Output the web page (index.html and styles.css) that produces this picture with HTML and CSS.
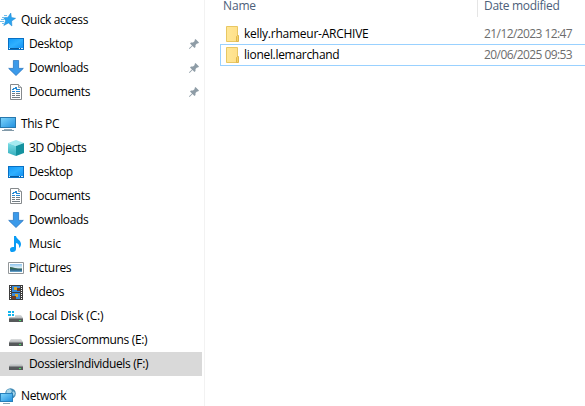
FILE: index.html
```html
<!DOCTYPE html>
<html lang="en">
<head>
<meta charset="utf-8">
<title>DossiersIndividuels (F:)</title>
<link rel="stylesheet" href="styles.css">
</head>
<body>
<svg class="defs" aria-hidden="true">
  <defs>
    <linearGradient id="blue" x2="1" y2="1"><stop stop-color="#149bfa"/><stop offset=".5" stop-color="#2fb0ff"/><stop offset="1" stop-color="#1492f4"/></linearGradient>
    <linearGradient id="screen" x2="1" y2="1"><stop stop-color="#7bd3fb"/><stop offset="1" stop-color="#2492df"/></linearGradient>
    <linearGradient id="sky" x2="0" y2="1"><stop stop-color="#8fc4ef"/><stop offset=".5" stop-color="#e2f2f5"/><stop offset=".6" stop-color="#3c6d66"/><stop offset=".75" stop-color="#285f83"/><stop offset="1" stop-color="#71b0d8"/></linearGradient>
    <linearGradient id="fold"><stop stop-color="#ffe796"/><stop offset="1" stop-color="#ffe08a"/></linearGradient>
    <linearGradient id="side" x2="0" y2="1"><stop stop-color="#7bdde6"/><stop offset="1" stop-color="#35aebd"/></linearGradient>
    <linearGradient id="case" x2="0" y2="1"><stop stop-color="#dddfe0"/><stop offset="1" stop-color="#b5b8ba"/></linearGradient>
    <symbol id="desktop" viewBox="0 0 16 16"><path fill="#0870c4" d="M0 2h16v12H0z"/><path fill="url(#blue)" d="M1 3h14v9H1z"/><path fill="#075a9e" d="M1 12h14v1H1z"/><path fill="#d6efff" d="M1 12h1v1H1zM11 12h1v1h-1zM13 12h2v1h-2z"/></symbol>
    <symbol id="down" viewBox="0 0 16 16"><path fill="#3b9aea" stroke="#2876c2" stroke-width=".8" d="M5.400.4h5.200v8h4.700L8 15.500.7 8.400h4.700z"/></symbol>
    <symbol id="doc" viewBox="0 0 16 16"><path fill="#fff" stroke="#85898c" d="M2.500.5h8l3 3v12h-11z"/><path fill="#dfe2e4" stroke="#85898c" stroke-width=".8" d="M10.500.5v3h3"/><path fill="none" stroke="#278ad4" d="M7 3.500h2M5 4.500h4M4 5.500h2m2 0h4M4 7.500h3m1 0h4"/><path stroke="#737d84" d="M4 9.500h3m1 0h4M4 11.500h3m1 0h4M4 13.500h8"/></symbol>
    <symbol id="star" viewBox="0 0 16 16"><path fill="#2aa3ef" stroke="#1683cf" stroke-width=".5" d="m10.800 1 .6 4.500 4.200.8-4 2.700.3 5-3.400-3-4.700 2.500 1.800-4.800L3.500 5.500l4.300-.1z"/><path fill="none" stroke="#70bdeb" d="M4 3.500h3M2 5.500h3M1 7.500h3M0 9.500h4M2 11.500h3"/></symbol>
    <symbol id="pc" viewBox="0 0 16 16"><path fill="#2878ad" d="M0 1h16v11H0z"/><path fill="url(#screen)" d="M1 2h14v9H1z"/><path fill="#94abb9" d="M4 13h8v1H4z"/><path fill="#8199a8" d="M2 14h12v1H2z"/></symbol>
    <symbol id="cube" viewBox="0 0 16 16"><path fill="#a4ebf1" d="m0 3 8-3 8 3-8 3z"/><path fill="url(#side)" d="M0 3l8 3v10l-8-3z"/><path fill="#14929f" d="m16 3-8 3v10l8-3z"/></symbol>
    <symbol id="music" viewBox="0 0 16 16"><path fill="#0a9cf5" d="M6 0h2c.3 3 5 4 5 8 0 2-.8 3-2 4 .7-3-.8-4.700-3-5v6c0 2-1.500 3-3.500 3S2 15 2 13.400C2 11.600 3.700 10.500 6 11z"/></symbol>
    <symbol id="picture" viewBox="0 0 16 16"><path fill="#fff" stroke="#929699" d="M.5 2.500h15v11H.5z"/><path fill="url(#sky)" d="M2 4h12v8H2z"/><path fill="#346657" d="M2 7c3 0 5 1 8 2H2z"/></symbol>
    <symbol id="video" viewBox="0 0 16 16"><path fill="#3d3d3d" d="M1 1h14v15H1z"/><path fill="#3589dc" d="M4 2h8v6H4zM4 9h8v6H4z"/><path fill="#d7a72c" d="M6 3h3v3H6zM7 10h3v3H7z"/><path fill="#6e3c25" d="M9 4h3v3H9zM4 12h4v3H4z"/><path fill="none" stroke="#fff" stroke-dasharray="1 1" d="M2.500 2v14M13.500 2v14"/></symbol>
    <symbol id="drive" viewBox="0 0 16 16"><path fill="url(#case)" d="M3 7h10l2 3H1z"/><path fill="#56595b" d="M1 10h14v4H1z"/><path fill="#85898b" d="M1 10h14v1H1z"/><path fill="#45df62" d="M11 12h2v1h-2z"/></symbol>
    <symbol id="local" viewBox="0 0 16 16"><use href="#drive"/><path fill="#fff" d="M0 3h7v6H0z"/><path fill="#10b5ee" d="M0 3h3v2H0zM4 3h2v2H4zM0 6h3v2H0zM4 6h2v2H4z"/></symbol>
    <symbol id="network" viewBox="0 0 16 16"><circle cx="10.500" cy="5.500" r="5.300" fill="#438cb7"/><path fill="#a6d4e8" d="M7 2l3-1 2 2-2 3H6zM13 3l2 2-1 3-2-2z"/><path fill="#2780bb" d="M0 5h13v9H0z"/><path fill="url(#screen)" d="M1 6h11v7H1z"/><path fill="#8aa5b4" d="M3 15h7v1H3z"/></symbol>
    <symbol id="pin" viewBox="0 0 10 10"><path fill="#8e9ca6" d="M6.500 0 10 3.500 9 4.500l-1-.1L6.500 6v2l-1 1-2-2L.8 9.700 0 10l.3-.9L3 6.500l-2-2 1-1h2L5.700 2l-.1-1z"/></symbol>
    <symbol id="folder" viewBox="0 0 13 16"><path fill="url(#fold)" stroke="#e8c763" d="M.5.5h11v15H.5z"/><path fill="#f5d36d" stroke="#dfb74d" d="M10.500 15.500v-5l1-1h1v6z"/></symbol>
  </defs>
</svg>
<div class="explorer">
  <nav class="sidebar">
    <section class="group">
      <div class="node root"><svg class="icon"><use href="#star"/></svg><span>Quick access</span></div>
      <div class="node"><svg class="icon"><use href="#desktop"/></svg><span>Desktop</span><svg class="pin"><use href="#pin"/></svg></div>
      <div class="node"><svg class="icon"><use href="#down"/></svg><span>Downloads</span><svg class="pin"><use href="#pin"/></svg></div>
      <div class="node"><svg class="icon"><use href="#doc"/></svg><span>Documents</span><svg class="pin"><use href="#pin"/></svg></div>
    </section>
    <section class="group">
      <div class="node root"><svg class="icon"><use href="#pc"/></svg><span>This PC</span></div>
      <div class="node"><svg class="icon"><use href="#cube"/></svg><span>3D Objects</span></div>
      <div class="node"><svg class="icon"><use href="#desktop"/></svg><span>Desktop</span></div>
      <div class="node"><svg class="icon"><use href="#doc"/></svg><span>Documents</span></div>
      <div class="node"><svg class="icon"><use href="#down"/></svg><span>Downloads</span></div>
      <div class="node"><svg class="icon"><use href="#music"/></svg><span class="loose">Music</span></div>
      <div class="node"><svg class="icon"><use href="#picture"/></svg><span>Pictures</span></div>
      <div class="node"><svg class="icon"><use href="#video"/></svg><span>Videos</span></div>
      <div class="node"><svg class="icon"><use href="#local"/></svg><span class="loose">Local Disk (C:)</span></div>
      <div class="node"><svg class="icon"><use href="#drive"/></svg><span>DossiersCommuns (E:)</span></div>
      <div class="node selected"><svg class="icon"><use href="#drive"/></svg><span>DossiersIndividuels (F:)</span></div>
    </section>
    <section class="group">
      <div class="node root"><svg class="icon"><use href="#network"/></svg><span>Network</span></div>
    </section>
  </nav>
  <main class="files">
    <div class="columns"><span class="col-name">Name</span><span class="col-date">Date modified</span></div>
    <div class="file"><svg class="folder"><use href="#folder"/></svg><span class="name">kelly.rhameur-ARCHIVE</span><span class="date">21/12/2023 12:47</span></div>
    <div class="file focused"><svg class="folder"><use href="#folder"/></svg><span class="name">lionel.lemarchand</span><span class="date">20/06/2025 09:53</span></div>
  </main>
</div>
</body>
</html>
```
FILE: styles.css
```css
* { box-sizing: border-box; }
body {
  margin: 0;
  background: #fff;
  color: #000;
  font: 12px/16px "Open Sans", "Noto Sans", sans-serif;
  letter-spacing: -0.35px;
  white-space: nowrap;
  overflow: hidden;
}
.defs { position: absolute; width: 0; height: 0; }
.explorer { display: flex; height: 406px; overflow: hidden; }
.sidebar {
  width: 205px;
  flex: none;
  padding: 8px 2px 0 0;
  border-right: 1px solid #f2f2f2;
  display: flex;
  flex-direction: column;
  gap: 8px;
}
.node {
  display: flex;
  align-items: center;
  height: 24px;
  gap: 5px;
  padding-left: 8px;
}
.root { padding-left: 0; }
.selected { background: #d9d9d9; }
.loose { letter-spacing: -0.15px; }
.icon { width: 16px; height: 16px; flex: none; }
.pin { width: 10px; height: 10px; margin: 0 3px 0 auto; }
.files { flex: 1; min-width: 0; }
.columns { display: flex; height: 17px; color: #4c607a; line-height: 11px; letter-spacing: -0.3px; }
.col-name { width: 273px; padding-left: 18px; border-right: 1px solid #e5e5e5; letter-spacing: -0.15px; }
.col-date { padding-left: 6px; }
.file {
  display: flex;
  align-items: center;
  height: 21px;
  margin-left: 15px;
  padding-left: 6px;
}
.columns + .file { margin-top: 6px; letter-spacing: -0.25px; }
.file.focused { height: 22px; border: 1px solid #99d1ff; border-right: 0; padding-left: 5px; letter-spacing: -0.3px; }
.folder { width: 13px; height: 16px; flex: none; margin-right: 5px; }
.name { width: 240px; }
.date { color: #6d6d6d; letter-spacing: -0.58px; }
```
